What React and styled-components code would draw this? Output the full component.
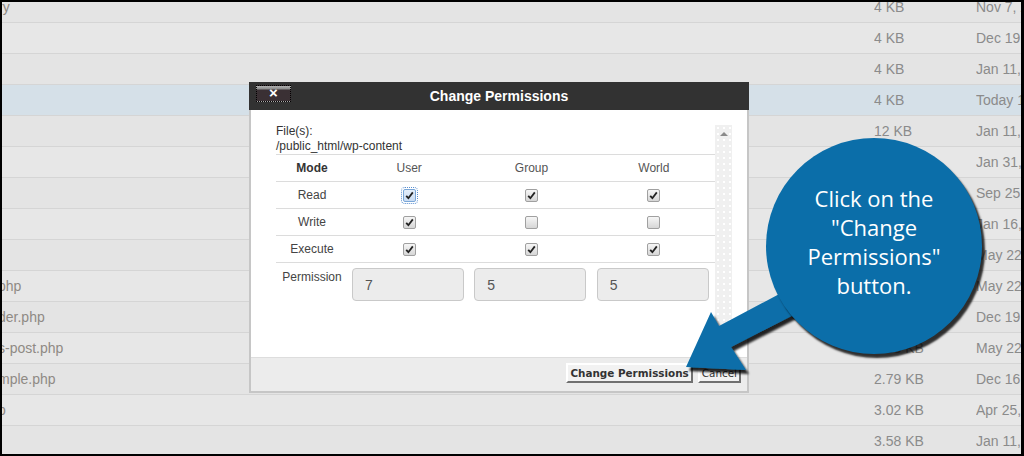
import React from "react";
import styled, { createGlobalStyle } from "styled-components";

const GlobalStyle = createGlobalStyle`
  html, body {
    margin: 0;
    padding: 0;
    background: #000;
  }
  body {
    font-family: "Liberation Sans", Arial, sans-serif;
  }
`;

const Frame = styled.div`
  position: relative;
  box-sizing: border-box;
  width: 1024px;
  height: 456px;
  border: 2px solid #000;
  border-right-width: 3px;
  overflow: hidden;
  background: #e5e5e5;
`;

const FileList = styled.div`
  margin-top: -10px;
`;

const Row = styled.div`
  display: grid;
  grid-template-columns: 872px 102px 1fr;
  align-items: center;
  height: 30px;
  border-bottom: 1px solid #d5d5d5;
  background: ${(p) => (p.$selected ? "#d5e0e8" : p.$alt ? "#e7e7e7" : "#e4e4e4")};
  font-size: 14px;
  color: #8b8b8b;
  white-space: nowrap;
`;

const NameCell = styled.div`
  margin-left: -4px;
  color: #8f8a84;
`;

const Cell = styled.div`
  overflow: hidden;
`;

const Modal = styled.div`
  position: absolute;
  left: 247px;
  top: 80px;
  width: 500px;
  display: flex;
  flex-direction: column;
`;

const ModalHeader = styled.div`
  position: relative;
  height: 28px;
  background: #323232;
  display: flex;
  align-items: center;
  justify-content: center;
  color: #fff;
  font-weight: bold;
  font-size: 14px;
`;

const CloseButton = styled.div`
  position: absolute;
  left: 7px;
  top: 3px;
  width: 33px;
  height: 15px;
  border: 1px dotted #000;
  background: linear-gradient(#b0b0b0 0, #8a8a8a 3px, #3a3034 4px, #3a3034 100%);
  color: #fff;
  font-size: 15px;
  font-weight: bold;
  line-height: 14px;
  text-align: center;
`;

const ModalFrame = styled.div`
  border: 2px solid #c6c6c6;
  border-top: 0;
  display: flex;
  flex-direction: column;
`;

const ModalBody = styled.div`
  box-sizing: border-box;
  height: 247px;
  background: #fff;
  display: flex;
  padding: 14px 15px 0 25px;
`;

const Content = styled.div`
  width: 439px;
`;

const FileLabel = styled.div`
  font-size: 12px;
  line-height: 15px;
  color: #333;
`;

const ScrollTrack = styled.div`
  width: 17px;
  margin-top: 1px;
  background-color: #f0f0f0;
  background-image: radial-gradient(circle, #ffffff 0.8px, transparent 1.2px);
  background-size: 6px 6px;
  display: flex;
  justify-content: center;
  padding-top: 7px;
  box-sizing: border-box;
`;

const UpArrow = styled.div`
  width: 0;
  height: 0;
  border-left: 4px solid transparent;
  border-right: 4px solid transparent;
  border-bottom: 4px solid #8a8a8a;
`;

const Table = styled.div`
  border-top: 1px solid #dcdcdc;
`;

const PermRow = styled.div`
  display: grid;
  grid-template-columns: 72px repeat(3, 1fr);
  align-items: ${(p) => (p.$top ? "start" : "center")};
  justify-items: center;
  height: ${(p) => (p.$top ? "auto" : "26px")};
  padding-top: ${(p) => (p.$top ? "5px" : "0")};
  border-bottom: ${(p) => (p.$top ? "0" : "1px solid #dcdcdc")};
  font-size: 12px;
  color: #444;
`;

const HeadCell = styled.div`
  font-weight: ${(p) => (p.$bold ? "bold" : "normal")};
  color: ${(p) => (p.$bold ? "#333" : "#555")};
`;

const RowLabel = styled.div`
  margin-top: ${(p) => (p.$top ? "2px" : "0")};
  line-height: 15px;
`;

const Box = styled.span`
  box-sizing: border-box;
  display: inline-flex;
  align-items: center;
  justify-content: center;
  width: 13px;
  height: 13px;
  border: 1px solid ${(p) => (p.$focus ? "#7aa7d8" : "#a0a0a0")};
  border-radius: 2px;
  background: ${(p) => (p.$focus ? "linear-gradient(#e4eefa, #c9dcf3)" : "linear-gradient(#f6f6f6, #d6d6d6)")};
  outline: ${(p) => (p.$focus ? "1px dotted #5a8fd0" : "none")};
  outline-offset: 1px;
`;

const PermInput = styled.input`
  justify-self: start;
  box-sizing: border-box;
  width: 112px;
  height: 33px;
  margin-left: 4px;
  border: 1px solid #c9c9c9;
  border-radius: 4px;
  background: #ececec;
  padding: 0 12px;
  font-family: "Liberation Sans", Arial, sans-serif;
  font-size: 14px;
  color: #555;
  outline: none;
`;

const Footer = styled.div`
  box-sizing: border-box;
  height: 34px;
  background: #ececec;
  border-top: 1px solid #dddddd;
  display: flex;
  justify-content: flex-end;
  align-items: flex-start;
  gap: 5px;
  padding: 5px 6px 0 0;
`;

const Button = styled.button`
  box-sizing: border-box;
  height: 20px;
  padding: 0 2px;
  font-family: "DejaVu Sans", Verdana, sans-serif;
  font-size: 10.4px;
  font-weight: ${(p) => (p.$primary ? "bold" : "normal")};
  color: #333;
  background: #f2f2f2;
  border: 2px solid;
  border-color: #ffffff #707070 #707070 #ffffff;
  line-height: 14px;
`;

const ArrowSvg = styled.svg`
  position: absolute;
  left: 676px;
  top: 263px;
  width: 145px;
  height: 125px;
  overflow: visible;
`;

const Bubble = styled.div`
  position: absolute;
  left: 764px;
  top: 136px;
  width: 216px;
  height: 216px;
  border-radius: 50%;
  background: #0b6ea9;
  box-shadow: 3px 4px 2px rgba(0, 0, 0, 0.8);
  display: flex;
  flex-direction: column;
  align-items: center;
  justify-content: center;
  padding-bottom: 8px;
  box-sizing: border-box;
  color: #fff;
  font-family: "Open Sans", "Noto Sans", sans-serif;
  font-size: 22px;
  line-height: 29px;
  text-align: center;
`;

const rows = [
  { name: "ry", size: "4 KB", date: "Nov 7, 2017 9:14 AM" },
  { name: "", size: "4 KB", date: "Dec 19, 2017 2:10 PM" },
  { name: "", size: "4 KB", date: "Jan 11, 2018 8:32 AM" },
  { name: "", size: "4 KB", date: "Today 11:20 AM", selected: true },
  { name: "", size: "12 KB", date: "Jan 11, 2018 8:32 AM" },
  { name: "l", size: "4 KB", date: "Jan 31, 2018 4:05 PM" },
  { name: "", size: "4 KB", date: "Sep 25, 2017 1:40 PM" },
  { name: "", size: "4 KB", date: "Jan 16, 2018 10:02 AM" },
  { name: "", size: "4 KB", date: "May 22, 2017 3:11 PM" },
  { name: "php", size: "418 bytes", date: "May 22, 2017 3:11 PM" },
  { name: "der.php", size: "1.41 KB", date: "Dec 19, 2017 2:10 PM" },
  { name: "s-post.php", size: "2.33 KB", date: "May 22, 2017 3:11 PM" },
  { name: "mple.php", size: "2.79 KB", date: "Dec 16, 2017 6:45 PM" },
  { name: "p", size: "3.02 KB", date: "Apr 25, 2017 9:30 AM" },
  { name: "", size: "3.58 KB", date: "Jan 11, 2018 8:32 AM" },
];

const perms = [
  { label: "Read", values: [true, true, true] },
  { label: "Write", values: [true, false, false] },
  { label: "Execute", values: [true, true, true] },
];

function Check({ checked, focus }) {
  return (
    <Box $focus={focus}>
      {checked && (
        <svg width="9" height="9" viewBox="0 0 9 9">
          <path d="M1.2 4.8 L3.4 7.2 L7.8 1.4" fill="none" stroke="#222" strokeWidth="1.8" />
        </svg>
      )}
    </Box>
  );
}

export default function App() {
  return (
    <>
      <GlobalStyle />
      <Frame>
        <FileList>
          {rows.map((r, i) => (
            <Row key={i} $selected={r.selected} $alt={i % 2 === 1}>
              <NameCell>{r.name}</NameCell>
              <Cell>{r.size}</Cell>
              <Cell>{r.date}</Cell>
            </Row>
          ))}
        </FileList>

        <Modal>
          <ModalHeader>
            <CloseButton>×</CloseButton>
            Change Permissions
          </ModalHeader>
          <ModalFrame>
            <ModalBody>
              <Content>
                <FileLabel>
                  File(s):
                  <br />
                  /public_html/wp-content
                </FileLabel>
                <Table>
                  <PermRow>
                    <HeadCell $bold>Mode</HeadCell>
                    <HeadCell>User</HeadCell>
                    <HeadCell>Group</HeadCell>
                    <HeadCell>World</HeadCell>
                  </PermRow>
                  {perms.map((p, i) => (
                    <PermRow key={p.label}>
                      <RowLabel>{p.label}</RowLabel>
                      {p.values.map((v, j) => (
                        <Check key={j} checked={v} focus={i === 0 && j === 0} />
                      ))}
                    </PermRow>
                  ))}
                  <PermRow $top>
                    <RowLabel $top>Permission</RowLabel>
                    <PermInput readOnly value="7" />
                    <PermInput readOnly value="5" />
                    <PermInput readOnly value="5" />
                  </PermRow>
                </Table>
              </Content>
              <ScrollTrack>
                <UpArrow />
              </ScrollTrack>
            </ModalBody>
            <Footer>
              <Button $primary>Change Permissions</Button>
              <Button>Cancel</Button>
            </Footer>
          </ModalFrame>
        </Modal>

        <ArrowSvg viewBox="678 265 145 125">
          <defs>
            <filter id="arrowShadow" x="-20%" y="-20%" width="150%" height="150%">
              <feDropShadow dx="3" dy="4" stdDeviation="1.2" floodColor="#000" floodOpacity="0.85" />
            </filter>
          </defs>
          <polygon
            points="800,283 719,326 711,312 686,367 746,370 731,347 813,305"
            fill="#0b6ea9"
            filter="url(#arrowShadow)"
          />
        </ArrowSvg>

        <Bubble>
          <div>Click on the</div>
          <div>"Change</div>
          <div>Permissions"</div>
          <div>button.</div>
        </Bubble>
      </Frame>
    </>
  );
}
